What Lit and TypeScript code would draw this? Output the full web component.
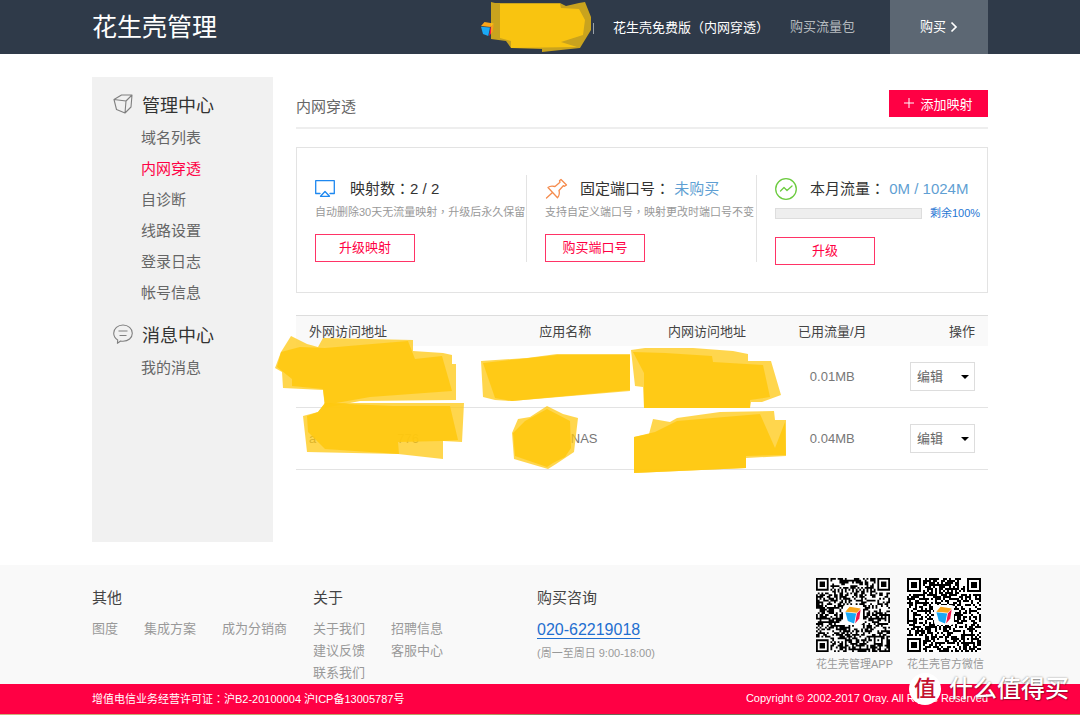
import { LitElement, html, svg, css } from "lit";
import { customElement, property } from "lit/decorators.js";
import { classMap } from "lit/directives/class-map.js";

/** Three-sided brand cube, drawn in a 45x48 box. */
const cubeFaces = svg`
  <path d="M12 0 44 5 33 17 0 14Z" fill="#f9a51a" />
  <path d="M0 16 31 19 25 48 7 41Z" fill="#1ba8f5" />
  <path d="M44 7 33 19 28 48 40 34Z" fill="#f5154a" />
`;

/** Builds the module path of a QR-like code with finder, timing and alignment marks. */
function qrPath(n: number, seed: number): string {
  let s = seed;
  const rand = () => {
    s = (s * 1103515245 + 12345) & 0x7fffffff;
    return (s >> 8) / 0x7fffff;
  };
  const ring = (x: number, y: number, cx: number, cy: number) => Math.max(Math.abs(x - cx), Math.abs(y - cy));
  let d = "";
  for (let y = 0; y < n; y++) {
    for (let x = 0; x < n; x++) {
      let on = rand() > 0.46;
      if (x === 6 || y === 6) on = (x + y) % 2 === 0;
      const a = ring(x, y, n - 7, n - 7);
      if (a <= 2) on = a !== 1;
      for (const [cx, cy] of [[3, 3], [n - 4, 3], [3, n - 4]]) {
        const r = ring(x, y, cx, cy);
        if (r <= 4) on = r !== 2 && r !== 4;
      }
      if (on) d += `M${x} ${y}h1v1h-1z`;
    }
  }
  return d;
}

@customElement("qr-code")
class QrCode extends LitElement {
  @property({ type: Number }) modules = 37;
  @property({ type: Number }) seed = 1;
  @property() caption = "";
  static styles = css`
    :host { display: block; width: 77px; }
    .code { display: block; width: 74px; height: 74px; }
    .caption { display: block; font-size: 11px; line-height: 24px; color: #999; white-space: nowrap; }
  `;
  render() {
    const n = this.modules;
    const k = n * 0.27;
    const o = (n - k) / 2;
    return html`
      <svg class="code" viewBox="0 0 ${n} ${n}" role="img" aria-label=${this.caption}>
        <rect width=${n} height=${n} fill="#fff" />
        <path d=${qrPath(n, this.seed)} fill="#000" />
        <rect x=${o} y=${o} width=${k} height=${k} rx="1.5" fill="#fff" />
        <g transform="translate(${o + k * 0.12} ${o + k * 0.09}) scale(${(k * 0.8) / 46})">${cubeFaces}</g>
      </svg>
      <span class="caption">${this.caption}</span>
    `;
  }
}

const sections = [
  {
    title: "管理中心",
    icon: svg`<path d="M1 5.5 8.5 1H19L18 13 12 19 3.5 15.5ZM1 5.5 13 7 19 1M13 7 12 19" />`,
    items: ["域名列表", "内网穿透", "自诊断", "线路设置", "登录日志", "帐号信息"],
  },
  {
    title: "消息中心",
    icon: svg`<path d="M4.700 16C2.200 14.400.7 12 .7 9.300.7 4.700 4.800 1 10 1s9.300 3.700 9.300 8.300-4.100 8-9.300 8c-.9 0-1.600-.1-2.400-.3L4.400 19.300ZM5.500 7h9M6.500 11.500h7" />`,
    items: ["我的消息"],
  },
];

const rows = [
  { used: "0.01MB", id: "a" },
  { used: "0.04MB", id: "b" },
];

@customElement("app-root")
class AppRoot extends LitElement {
  @property() current = "内网穿透";

  static styles = css`
    :host {
      display: block;
      font-family: "Liberation Sans", "Noto Sans CJK SC", sans-serif;
      font-size: 13px;
      color: #333;
      background: #fff;
      position: relative;
    }
    * { box-sizing: border-box; }
    h1, h2, h3, p, ul { margin: 0; padding: 0; font-weight: 400; }
    ul { list-style: none; }
    a { color: inherit; text-decoration: none; }
    button, select { font: inherit; }
    .wrap { max-width: 896px; margin: 0 auto; }
    .mid { font-family: "Noto Sans CJK TC", sans-serif; }

    .top { background: #2f3a49; color: #fff; }
    .top .wrap { display: flex; align-items: center; height: 54px; }
    .top h1 { font-size: 25px; line-height: 54px; }
    .nav { display: flex; align-items: center; margin-left: auto; line-height: 54px; white-space: nowrap; }
    .account { display: block; width: 116px; height: 54px; margin-right: 18px; }
    .plan { margin-right: 21px; }
    .pack { color: #b5babf; margin-right: 35px; }
    .buy { display: flex; align-items: center; justify-content: center; gap: 4px; width: 98px; background: #5c6773; }
    .buy svg { width: 8px; height: 12px; }

    .main { display: grid; grid-template-columns: 181px minmax(0, 1fr); gap: 23px; padding: 23px 0; }
    .side { background: #f1f1f1; min-height: 465px; padding: 14px 21px; }
    .side h2 { display: flex; align-items: center; gap: 9px; font-size: 18px; line-height: 30px; margin-bottom: 1px; }
    .side svg { width: 20px; height: 20px; margin-bottom: 4px; fill: none; stroke: #808080; stroke-width: 1.1; stroke-linejoin: round; }
    .side ul { margin-bottom: 13px; padding-left: 28px; font-size: 15px; line-height: 31px; color: #666; }
    .side .on { color: #ff0044; }

    .head { display: flex; align-items: center; justify-content: space-between; height: 52px; padding-top: 2px; border-bottom: 2px solid #eee; font-size: 15px; color: #666; }
    .head h2 { font-size: 15px; padding-top: 4px; }
    .add { display: flex; align-items: center; justify-content: center; gap: 6px; width: 99px; height: 27px; padding: 0; border: 0; background: #ff0044; color: #fff; font-size: 13px; }
    .add svg { width: 10px; height: 10px; }

    .panel { display: grid; grid-template-columns: repeat(3, minmax(0, 1fr)); align-items: start; border: 1px solid #e3e3e3; margin-top: 18px; padding: 27px 0; }
    .card { padding-left: 18px; border-right: 1px solid #e3e3e3; white-space: nowrap; }
    .card:last-child { border-right: 0; }
    .card h3 { display: flex; align-items: center; gap: 12px; font-size: 15px; line-height: 26px; }
    .card h3 svg { width: 23px; height: 24px; fill: none; stroke-width: 1.3; stroke-linejoin: round; stroke-linecap: round; }
    .card .val { color: #5f9fd3; }
    .note { font-size: 11px; line-height: 18px; color: #999; }
    .quota { display: flex; align-items: center; gap: 8px; font-size: 11px; line-height: 22px; color: #1f76d3; }
    progress { appearance: none; width: 147px; height: 11px; border: 1px solid #ddd; background: #eee; }
    progress::-webkit-progress-bar { background: #eee; }
    progress::-webkit-progress-value { background: #5f9fd3; }
    .act { display: block; width: 100px; height: 28px; margin-top: 13px; padding: 0 0 3px; border: 1px solid #ff3366; background: #fff; color: #ff0044; font-size: 13px; }

    .list { position: relative; margin-top: 22px; }
    table { width: 100%; table-layout: fixed; border-collapse: separate; border-spacing: 0; border-top: 1px solid #ddd; }
    th { height: 30px; padding: 0 0 2px; background: #f9f9f9; font-weight: 400; color: #444; }
    td { height: 62px; padding: 0; border-bottom: 1px solid #e3e3e3; text-align: center; color: #777; }
    .addr { width: 29.5%; padding-left: 13px; text-align: left; }
    .name { width: 18.8%; }
    .lan { width: 22.2%; }
    .used { width: 14%; }
    .ops { width: 15.5%; padding-right: 13px; text-align: right; }
    .ends { display: flex; justify-content: space-between; width: 110px; }
    .tail { display: block; padding-left: 38px; }
    .pick { display: inline-block; position: relative; vertical-align: middle; }
    .pick select { display: block; appearance: none; width: 65px; height: 29px; padding: 0 6px; border: 1px solid #ddd; border-radius: 0; background: #fff; color: #666; }
    .pick::after { content: ""; position: absolute; right: 6px; top: 13px; border: 4px solid transparent; border-top-color: #000; border-bottom: 0; pointer-events: none; }
    .marks { position: absolute; left: -26px; top: 16px; width: 520px; height: 150px; pointer-events: none; }

    .soft { fill: #ffc80f; fill-opacity: 0.74; }
    .solid { fill: #ffc80f; fill-opacity: 0.88; }

    .foot { background: #f9f9f9; }
    .foot .wrap { display: grid; grid-template-columns: 221px 224px 1fr auto; min-height: 119px; }
    .foot h3 { font-size: 15px; line-height: 22px; margin: 22px 0 9px; color: #444; }
    .links { display: grid; grid-template-columns: max-content max-content max-content; column-gap: 26px; line-height: 22px; color: #999; }
    .tel { display: inline-block; font-size: 16px; line-height: 24px; color: #1f6fd0; text-decoration: underline; text-underline-offset: 3px; }
    .hours { font-size: 11px; line-height: 22px; color: #999; }
    .codes { display: flex; gap: 14px; padding: 13px 4px 0 0; }

    .legal { background: #ff0044; color: #fff; font-size: 11px; line-height: 29px; }
    .legal .wrap { display: flex; justify-content: space-between; }
    .edge { height: 2px; background: linear-gradient(90deg, #cbb27c, #b59c62 45%, #6b6453 55%, #a8894e); }

    .stamp { position: absolute; right: 11px; bottom: 9px; display: flex; align-items: center; gap: 8px; color: #fff; font-size: 24px; line-height: 36px; font-weight: 500; text-shadow: 0 0 2px rgba(0, 0, 0, 0.45), 1px 1px 1px rgba(0, 0, 0, 0.25); pointer-events: none; }
    .seal { display: block; width: 32px; height: 32px; border-radius: 50%; background: #fff; color: #c4122f; font-size: 22px; line-height: 31px; text-align: center; text-shadow: none; }
  `;

  private account() {
    return html`<svg class="account" viewBox="480 0 116 54" aria-hidden="true">
      <g transform="translate(482 22) scale(.29)">${cubeFaces}</g>
      <path d="M594.500 23v11" stroke="#9aa1a9" />
      <polygon class="soft" points="492,2 496,3 561,3 567,6 580,3 586,2 592,17 592,30 581,48 543,52 543,49 512,48 507,41 492,39" />
      <polygon class="solid" points="501,4 561,4 562,8 580,9 586,20 584,35 562,42 578,47 512,48 512,41 501,38" />
    </svg>`;
  }

  private marks() {
    return html`<svg class="marks" viewBox="270 330 520 150" aria-hidden="true">
      <polygon class="soft" points="281,351 291,335 307,343 318,346 323,337 413,339 413,350 443,352 452,354 452,363 456,363 456,399 360,400 325,407 323,389 283,387 282,371 275,367" />
      <polygon class="solid" points="281,351 300,346 325,347 408,340 415,358 442,355 452,390 370,396 325,404 323,388 292,385 292,378 277,366" />
      <polygon class="soft" points="303,415 318,411 325,402 464,402 462,441 443,440 443,458 398,453 307,451" />
      <polygon class="solid" points="307,415 318,411 325,402 393,405 450,405 458,439 442,440 398,441 399,453 325,448 308,431" />
      <polygon class="soft" points="481,360 527,357 557,353 630,353 630,390 512,400 495,399 483,396" />
      <polygon class="solid" points="483,362 557,354 630,354 630,389 512,400 495,397" />
      <polygon class="soft" points="547,405 563,413 578,417 574,451 565,457 556,463 548,468 514,458 512,432 518,418 530,416" />
      <polygon class="solid" points="547,408 570,420 571,447 565,456 553,462 547,466 515,455 513,432 525,420" />
      <polygon class="soft" points="631,349 645,347 693,347 733,350 748,353 748,360 771,360 781,394 762,401 751,401 750,407 644,407 643,386 635,385" />
      <polygon class="solid" points="633,351 665,352 712,355 713,361 763,364 770,396 750,399 750,407 644,407 644,372" />
      <polygon class="soft" points="634,436 649,433 653,418 670,421 677,417 720,411 774,410 775,419 786,419 786,455 746,457 746,467 634,472" />
      <polygon class="solid" points="634,436 655,431 677,420 760,413 775,447 785,421 786,454 746,455 746,467 634,472" />
    </svg>`;
  }

  render() {
    return html`
      <header class="top">
        <div class="wrap">
          <h1>花生壳管理</h1>
          <nav class="nav">
            ${this.account()}
            <a class="plan" href="#">花生壳免费版<span class="mid">（</span>内网穿透<span class="mid">）</span></a>
            <a class="pack" href="#">购买流量包</a>
            <a class="buy" href="#">购买
              <svg viewBox="0 0 8 12" fill="none" stroke="#fff" stroke-width="1.7"><path d="M1.500 1.500 6 6l-4.500 4.500" /></svg>
            </a>
          </nav>
        </div>
      </header>

      <main class="wrap main">
        <aside class="side">
          ${sections.map(
            (s) => html`
              <h2><svg viewBox="0 0 20 20">${s.icon}</svg>${s.title}</h2>
              <ul>
                ${s.items.map((i) => html`<li><a href="#" class=${classMap({ on: i === this.current })}>${i}</a></li>`)}
              </ul>
            `
          )}
        </aside>

        <section>
          <div class="head">
            <h2>内网穿透</h2>
            <button class="add" type="button">
              <svg viewBox="0 0 10 10" stroke="#fff"><path d="M5 0v10M0 5h10" /></svg>添加映射
            </button>
          </div>

          <div class="panel">
            <div class="card">
              <h3>
                <svg viewBox="0 0 23 24" stroke="#1e88f0"><path d="M5 16.500H.7V3.700h18.600v12.800H15M10 14.500 5.500 19.300h9Z" /></svg>
                <span>映射数<span class="mid">：</span>2 / 2</span>
              </h3>
              <p class="note">自动删除30天无流量映射<span class="mid">，</span>升级后永久保留</p>
              <button class="act" type="button">升级映射</button>
            </div>
            <div class="card">
              <h3>
                <svg viewBox="0 0 23 24" stroke="#f58b4c"><path d="M16 2.500 21.500 8 19.500 9.300 18.300 8.700 14 13.500C14.700 16 14.500 18.500 12.500 20.700L3 10.500C5 8.700 7.500 8.800 10 9.500L15 5.200 14.500 3.800ZM7.500 15.500 1.500 21" /></svg>
                <span>固定端口号<span class="mid">：</span> <span class="val">未购买</span></span>
              </h3>
              <p class="note">支持自定义端口号<span class="mid">，</span>映射更改时端口号不变</p>
              <button class="act" type="button">购买端口号</button>
            </div>
            <div class="card">
              <h3>
                <svg viewBox="0 0 23 24" stroke="#6ccb3f"><circle cx="11" cy="12" r="10.300" /><path d="M5.500 14 9 10.500l3 3L17 9" /></svg>
                <span>本月流量<span class="mid">：</span> <span class="val">0M / 1024M</span></span>
              </h3>
              <div class="quota">
                <progress id="flow" value="0" max="1024"></progress>
                <label for="flow">剩余100%</label>
              </div>
              <button class="act" type="button">升级</button>
            </div>
          </div>

          <div class="list">
            <table>
              <thead>
                <tr>
                  <th class="addr">外网访问地址</th>
                  <th class="name">应用名称</th>
                  <th class="lan">内网访问地址</th>
                  <th class="used">已用流量/月</th>
                  <th class="ops">操作</th>
                </tr>
              </thead>
              <tbody>
                ${rows.map(
                  (r) => html`<tr>
                    <td class="addr">${r.id === "b" ? html`<span class="ends"><span>a</span><span>776</span></span>` : ""}</td>
                    <td>${r.id === "b" ? html`<span class="tail">NAS</span>` : ""}</td>
                    <td></td>
                    <td>${r.used}</td>
                    <td class="ops">
                      <span class="pick"><select aria-label="操作"><option>编辑</option></select></span>
                    </td>
                  </tr>`
                )}
              </tbody>
            </table>
            ${this.marks()}
          </div>
        </section>
      </main>

      <footer>
        <div class="foot">
          <div class="wrap">
            <div>
              <h3>其他</h3>
              <div class="links"><a href="#">图度</a><a href="#">集成方案</a><a href="#">成为分销商</a></div>
            </div>
            <div>
              <h3>关于</h3>
              <div class="links">
                <div><a href="#">关于我们</a><br /><a href="#">建议反馈</a><br /><a href="#">联系我们</a></div>
                <div><a href="#">招聘信息</a><br /><a href="#">客服中心</a></div>
              </div>
            </div>
            <div>
              <h3>购买咨询</h3>
              <a class="tel" href="tel:020-62219018">020-62219018</a>
              <p class="hours">(周一至周日 9:00-18:00)</p>
            </div>
            <div class="codes">
              <qr-code modules="41" seed="77" caption="花生壳管理APP"></qr-code>
              <qr-code modules="37" seed="4021" caption="花生壳官方微信"></qr-code>
            </div>
          </div>
        </div>
        <div class="legal">
          <div class="wrap">
            <span>增值电信业务经营许可证<span class="mid">：</span>沪B2-20100004 沪ICP备13005787号</span>
            <span>Copyright © 2002-2017 Oray. All Rights Reserved</span>
          </div>
        </div>
        <div class="edge"></div>
      </footer>

      <div class="stamp"><span class="seal">值</span>什么值得买</div>
    `;
  }
}
